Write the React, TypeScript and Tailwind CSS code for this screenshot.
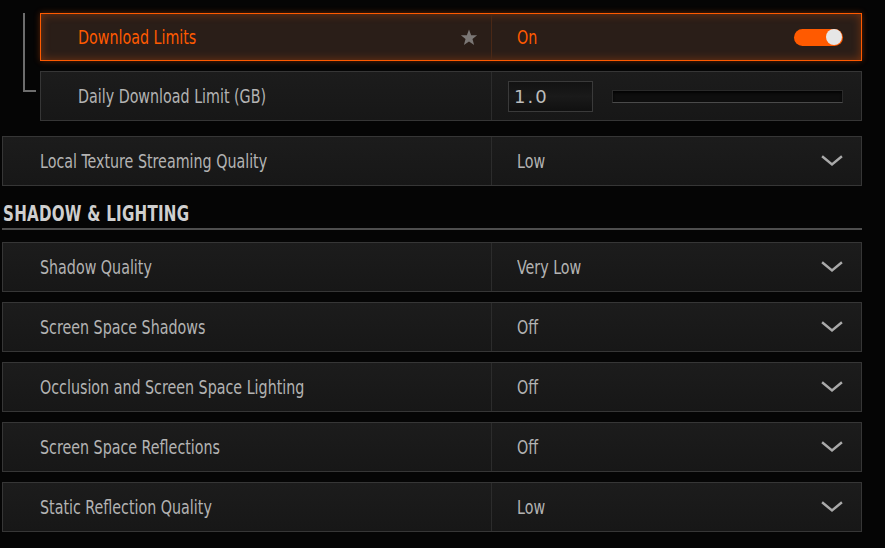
import React from "react";

const FONT = { fontFamily: '"Liberation Sans Narrow", "DejaVu Sans Condensed", "Liberation Sans", sans-serif' };

// condensed text: the face is narrowed a little further
function Txt({ children }: { children: React.ReactNode }) {
  return <span className="inline-block origin-left scale-x-[0.835] whitespace-nowrap">{children}</span>;
}

function Chevron() {
  return (
    <svg width="22" height="12" viewBox="0 0 22 12" className="shrink-0">
      <path d="M2 2 L11 9.5 L20 2" fill="none" stroke="#a9a9a9" strokeWidth="2.4" strokeLinecap="square" />
    </svg>
  );
}

function Star() {
  return (
    <svg width="18" height="17" viewBox="0 0 24 23">
      <path
        d="M12 0.8 L14.9 8.3 L23 8.6 L16.7 13.6 L18.9 21.6 L12 17 L5.1 21.6 L7.3 13.6 L1 8.6 L9.1 8.3 Z"
        fill="#7b7775"
      />
    </svg>
  );
}

type RowProps = { label: string; value: string };

function SelectRow({ label, value }: RowProps) {
  return (
    <div className="flex h-[50px] border border-[#363636] bg-gradient-to-b from-[#1c1c1c] to-[#171717]">
      <div className="flex w-[489px] items-center border-r border-[#2c2c2c] pl-[37px] text-[19px] text-[#b3b3b3]">
        <Txt>{label}</Txt>
      </div>
      <div className="flex flex-1 items-center justify-between pl-[25px] pr-[18px] text-[19px] text-[#b3b3b3]">
        <Txt>{value}</Txt>
        <Chevron />
      </div>
    </div>
  );
}

export default function App() {
  return (
    <div className="h-[548px] w-[885px] overflow-hidden bg-[#050505] pl-[2px] pt-[13px]" style={FONT}>
      <div className="w-[860px]">
        {/* nested download options */}
        <div className="flex">
          <div className="w-[38px] shrink-0 pl-[21px]">
            <div className="h-[79px] w-[13px] border-b-2 border-l-2 border-[#6d6d6d]" />
          </div>
          <div className="flex flex-1 flex-col gap-[10px]">
            <div className="flex h-[48px] border border-[#ff5a00] bg-[#2a1e18] shadow-[inset_0_0_10px_rgba(255,90,0,0.35),0_0_6px_rgba(255,90,0,0.35)]">
              <div className="flex w-[451px] items-center justify-between border-r border-[#4a2816] pl-[37px] pr-[13px] text-[19px] text-[#ff5a00]">
                <Txt>Download Limits</Txt>
                <Star />
              </div>
              <div className="flex flex-1 items-center justify-between pl-[25px] pr-[18px] text-[19px] text-[#ff5a00]">
                <Txt>On</Txt>
                <div className="flex h-[17px] w-[49px] items-center justify-end rounded-full bg-[#ff5a00] pr-[1px]">
                  <div className="h-[16px] w-[16px] rounded-full bg-[#e6e6e6]" />
                </div>
              </div>
            </div>
            <div className="flex h-[50px] border border-[#363636] bg-gradient-to-b from-[#1c1c1c] to-[#171717]">
              <div className="flex w-[451px] items-center border-r border-[#2c2c2c] pl-[37px] text-[19px] text-[#b3b3b3]">
                <Txt>Daily Download Limit (GB)</Txt>
              </div>
              <div className="flex flex-1 items-center pl-[16px] pr-[18px]">
                <div
                  className="flex h-[31px] w-[85px] items-center border border-[#3a3a3a] bg-gradient-to-b from-[#121212] via-[#1a1a1a] to-[#101010] pl-[5px] text-[18px] tracking-[2px] text-[#bdbdbd]"
                  style={{ fontFamily: '"DejaVu Sans", sans-serif' }}
                >
                  1.0
                </div>
                <div className="ml-[19px] h-[13px] flex-1 border border-[#2a2a2a] border-b-[#4a4a4a] bg-[#0e0e0e] shadow-[inset_0_2px_3px_rgba(0,0,0,0.8)]" />
              </div>
            </div>
          </div>
        </div>

        <div className="mt-[15px]">
          <SelectRow label="Local Texture Streaming Quality" value="Low" />
        </div>

        {/* section heading */}
        <div className="flex h-[44px] items-end border-b-2 border-[#4e4e4e] pb-[3px] pl-[1px]">
          <span className="inline-block origin-left scale-x-[0.8] whitespace-nowrap text-[21px] font-bold leading-[21px] tracking-[0.3px] text-[#cfcfcf]">
            SHADOW &amp; LIGHTING
          </span>
        </div>

        <div className="mt-[12px] flex flex-col gap-[10px]">
          <SelectRow label="Shadow Quality" value="Very Low" />
          <SelectRow label="Screen Space Shadows" value="Off" />
          <SelectRow label="Occlusion and Screen Space Lighting" value="Off" />
          <SelectRow label="Screen Space Reflections" value="Off" />
          <SelectRow label="Static Reflection Quality" value="Low" />
        </div>
      </div>
    </div>
  );
}
